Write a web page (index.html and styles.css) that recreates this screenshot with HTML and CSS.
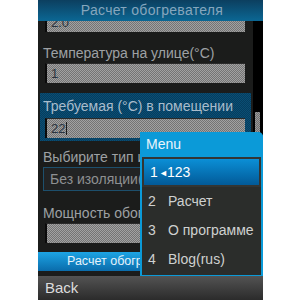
FILE: index.html
```html
<!DOCTYPE html>
<html lang="ru">

<head>
    <meta charset="UTF-8">
    <title>Расчет обогревателя</title>
    <link rel="stylesheet" href="styles.css">
</head>

<body>
    <!-- Phone screen -->
    <div class="phone">
        <div class="title">Расчет обогревателя</div>

        <div class="main">
            <div class="form">
                <div class="field scrolled">
                    <div class="input">2.0</div>
                </div>

                <div class="field outside">
                    <div class="label">Температура на улице(°C)</div>
                    <div class="input">1</div>
                </div>

                <div class="field active">
                    <div class="label">Требуемая (°C) в помещении</div>
                    <div class="input">22<span class="cursor"></span></div>
                </div>

                <div class="field insulation">
                    <div class="label">Выбирите тип изоляции</div>
                    <div class="select">Без изоляции(стены)</div>
                </div>

                <div class="field power">
                    <div class="label">Мощность обогревателя</div>
                    <div class="input"></div>
                </div>

                <div class="button">Расчет обогревателя</div>
            </div>

            <div class="scrollbar">
                <div class="thumb"></div>
            </div>
        </div>

        <div class="softkeys">Back</div>

        <!-- Options menu popup -->
        <div class="menu">
            <div class="menu-head">Menu</div>
            <div class="menu-item selected"><span class="num">1</span><span class="arrow">◄</span>123</div>
            <div class="menu-item"><span class="num">2</span>Расчет</div>
            <div class="menu-item"><span class="num">3</span>О программе</div>
            <div class="menu-item"><span class="num">4</span>Blog(rus)</div>
        </div>
    </div>
</body>

</html>
```

FILE: styles.css
```css
/* Page */
body {
    margin: 0;
    background-color: #ffffff;
    font-family: 'Liberation Sans', Arial, sans-serif;
}

/* Phone screen */
.phone {
    position: relative;
    width: 225px;
    height: 300px;
    margin-left: 38px;
    display: flex;
    flex-direction: column;
    background-color: #1b1c1b;
    overflow: hidden;
}

/* Title bar */
.title {
    position: relative;
    z-index: 1;
    height: 21px;
    line-height: 20px;
    padding-left: 3px;
    text-align: center;
    font-size: 14px;
    letter-spacing: 0.3px;
    color: #86a6bd;
    background: linear-gradient(#0c3f5f, #0b6794);
}

/* Scrolled content + scrollbar */
.main {
    flex: 1;
    display: flex;
    overflow: hidden;
}

.form {
    flex: 1;
    padding: 0 2px 0 2px;
}

.scrollbar {
    width: 10px;
    background-color: #000000;
}

.thumb {
    width: 5px;
    height: 30px;
    margin: 91px 0 0 2px;
    background: repeating-conic-gradient(#9a9a9a 0 25%, #6e6e6e 0 50%) 0 0 / 2px 2px;
}

/* Form fields */
.label {
    height: 16px;
    line-height: 16px;
    padding-left: 3px;
    font-size: 14px;
    color: #9ea1a4;
    white-space: nowrap;
    overflow: hidden;
}

.input {
    height: 20px;
    line-height: 20px;
    margin: 2px 6px 0 5px;
    padding-left: 4px;
    font-size: 13px;
    color: #2a3440;
    border-left: 2px solid #0a0a0a;
    border-top: 1px solid #2a2a2a;
    box-sizing: border-box;
    background: repeating-conic-gradient(#a2a2a2 0 25%, #747474 0 50%) 0 0 / 2px 2px;
}

.cursor {
    display: inline-block;
    width: 1px;
    height: 13px;
    margin-left: 1px;
    vertical-align: -2px;
    background-color: #1a1a1a;
}

.scrolled {
    margin-top: -11px;
}

.outside {
    margin-top: 13px;
}

/* Focused field */
.active {
    margin-top: 10px;
    height: 48px;
    padding-top: 5px;
    box-sizing: border-box;
    background: repeating-conic-gradient(#0a4e74 0 25%, #063d5e 0 50%) 0 0 / 2px 2px;
}

.active .label {
    color: #a9bccc;
}

.active .input {
    margin-top: 4px;
}

.insulation {
    margin-top: 8px;
}

.select {
    height: 24px;
    line-height: 23px;
    margin: 2px 6px 0 3px;
    padding-left: 6px;
    font-size: 14px;
    color: #8e9092;
    border: 1px solid #1d4f6c;
    box-sizing: border-box;
    background-color: #222324;
    white-space: nowrap;
    overflow: hidden;
}

.power {
    margin-top: 14px;
}

/* Action button */
.button {
    height: 19px;
    line-height: 18px;
    margin: 9px -2px 0 -2px;
    padding-left: 29px;
    font-size: 12.5px;
    color: #e6f2fb;
    background: linear-gradient(#1da4e4, #0a6cab);
    white-space: nowrap;
}

/* Softkey bar */
.softkeys {
    height: 24px;
    line-height: 24px;
    padding-left: 7px;
    font-size: 15px;
    color: #dcdcdc;
    background: linear-gradient(#535353, #2b2b2b);
}

/* Options menu popup */
.menu {
    position: absolute;
    left: 102px;
    top: 132px;
    z-index: 2;
    width: 123px;
    height: 144px;
    box-sizing: border-box;
    border: 2px solid #0b9ad8;
    border-top: none;
    border-bottom-width: 1px;
    border-top-right-radius: 5px;
    background-color: #2b2d2b;
}

.menu-head {
    height: 25px;
    line-height: 24px;
    margin: 0 -2px;
    padding-left: 6px;
    font-size: 14px;
    color: #eaf4fb;
    background-color: #0b9ad8;
    border-top-right-radius: 5px;
}

.menu-item {
    height: 29px;
    line-height: 29px;
    padding-left: 6px;
    font-size: 14px;
    color: #cfd1d0;
    white-space: nowrap;
}

.menu-item .num {
    display: inline-block;
    width: 20px;
}

.menu-item.selected {
    height: 30px;
    line-height: 26px;
    padding-left: 6px;
    border: 2px solid #333533;
    box-sizing: border-box;
    color: #ffffff;
    background: linear-gradient(#0b8fd6, #025a98);
}

.menu-item.selected .num {
    width: 9px;
}

.arrow {
    display: inline-block;
    width: 8px;
    font-size: 9px;
    vertical-align: 1px;
}
```
